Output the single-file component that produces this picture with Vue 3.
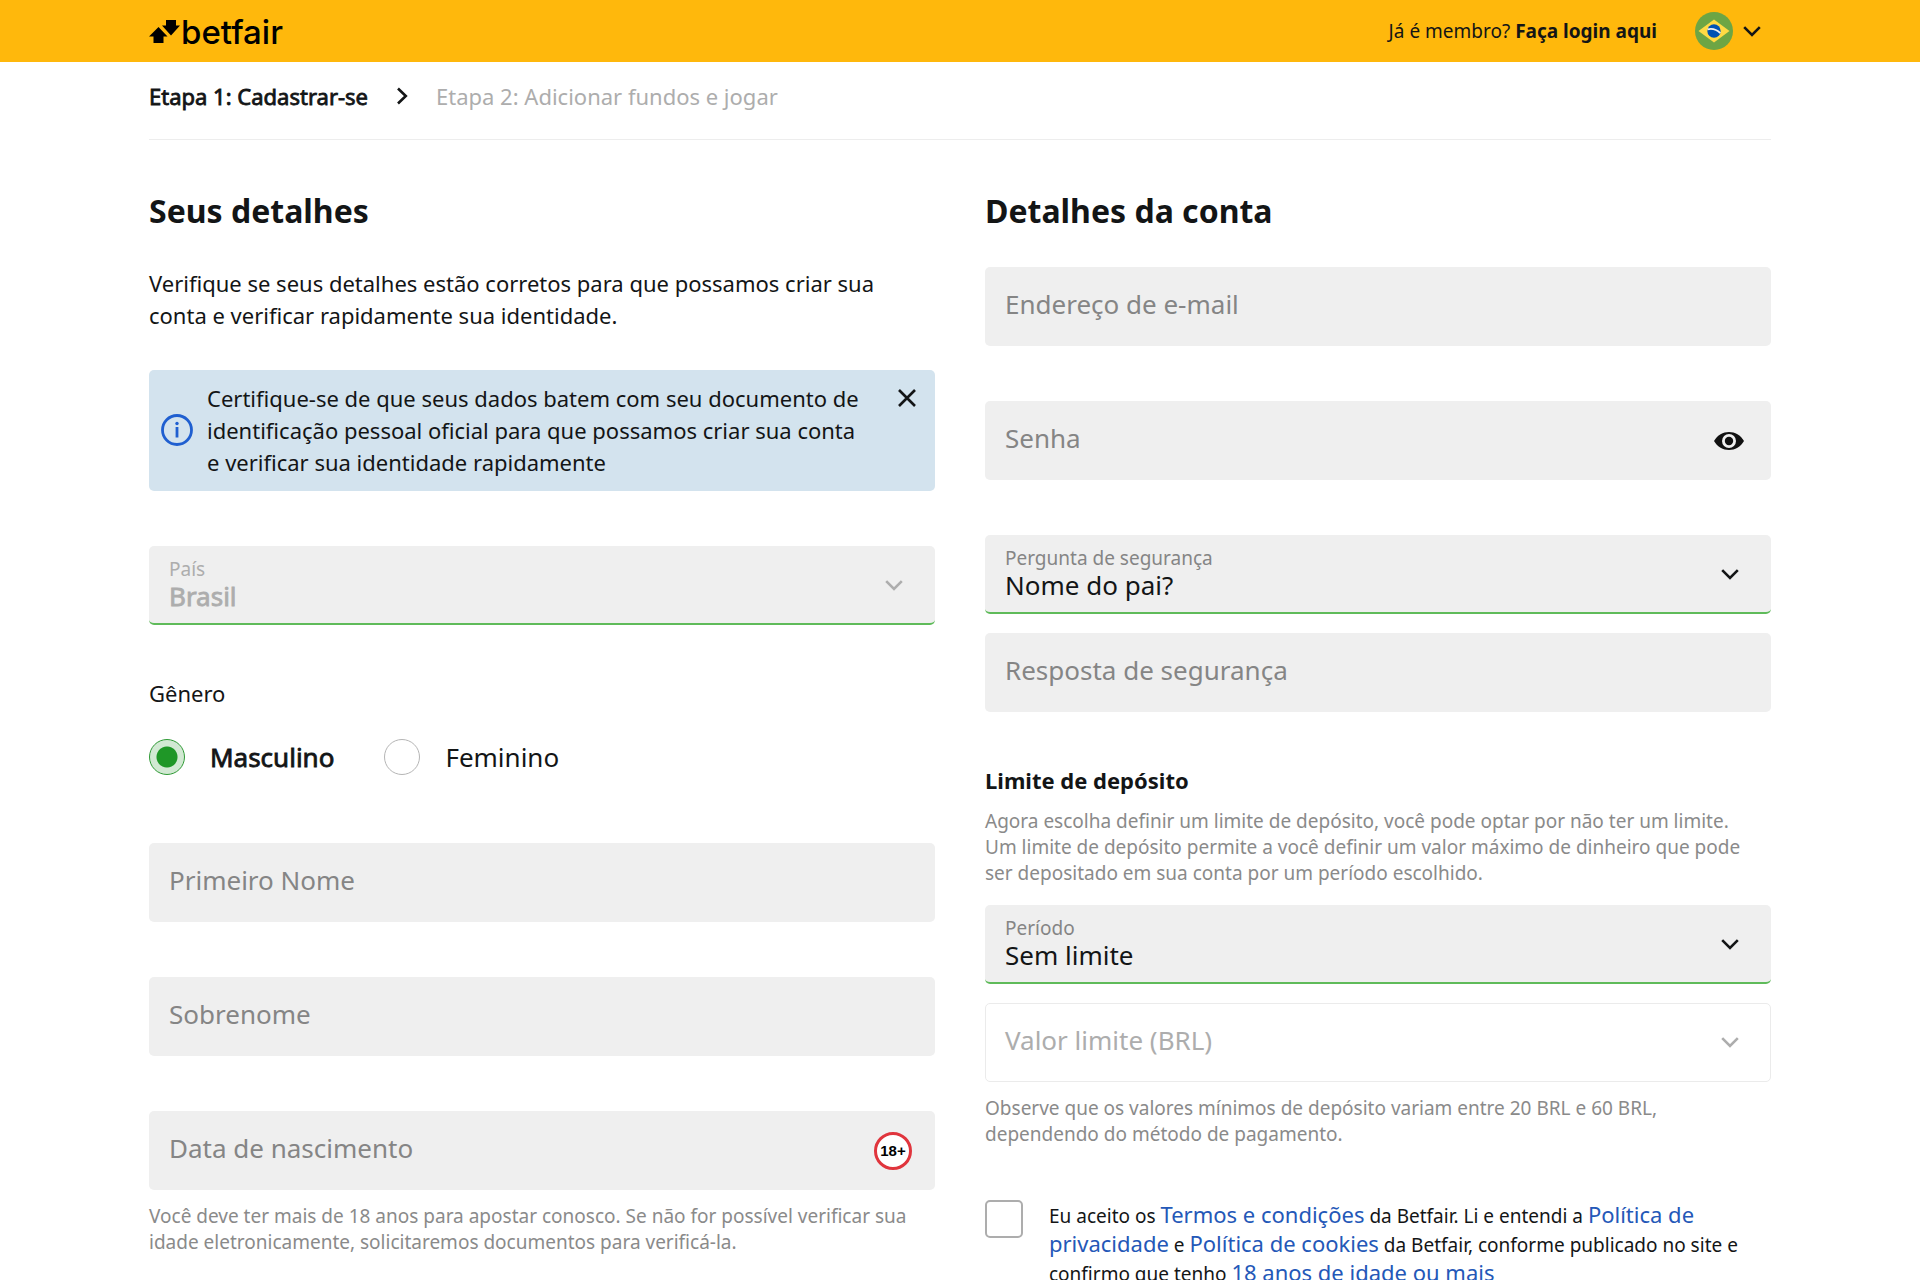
<script setup>
import { ref } from 'vue'

const showAlert = ref(true)
const showPassword = ref(false)
const gender = ref('m')
const country = ref('Brasil')
const question = ref('Nome do pai?')
const period = ref('Sem limite')
</script>

<template>
  <div class="page">
    <header class="topbar">
      <div class="wrap topbar-inner">
        <a class="logo" href="#" aria-label="betfair">
          <svg width="31" height="24" viewBox="0 0 31 24" aria-hidden="true">
            <path d="M9.5 7 18.5 16.5H14.5V23H4.5V16.5H0Z" />
            <path d="M17 0H27V5.5H31L22 15.5 13 5.5H17Z" />
          </svg>
          <span>betfair</span>
        </a>
        <div class="account">
          <p class="login">Já é membro? <a href="#">Faça login aqui</a></p>
          <button class="locale" type="button" aria-label="Brasil">
            <svg width="38" height="38" viewBox="0 0 38 38" aria-hidden="true">
              <circle cx="19" cy="19" r="19" fill="#6da544" />
              <path d="M19 7.5 34.5 19 19 30.5 3.5 19Z" fill="#ffda44" />
              <circle cx="19" cy="19" r="6.7" fill="#0052b4" />
              <path d="M12.6 17.3C17 16.3 22 17.8 25.3 21.2" fill="none" stroke="#f0f0f0" stroke-width="1.8" />
            </svg>
            <svg class="chevron" width="18" height="11" viewBox="0 0 18 11" aria-hidden="true"><path d="M1.2 1.2 9 9 16.8 1.2" /></svg>
          </button>
        </div>
      </div>
    </header>

    <nav class="wrap steps" aria-label="Etapas">
      <span class="emph">Etapa 1: Cadastrar-se</span>
      <svg class="chevron" width="12" height="18" viewBox="0 0 12 18" aria-hidden="true"><path d="M2 1.5 9.8 9 2 16.5" /></svg>
      <span class="next">Etapa 2: Adicionar fundos e jogar</span>
    </nav>

    <main class="wrap">
      <form class="columns" @submit.prevent>
        <section>
          <h2>Seus detalhes</h2>
          <p class="intro">Verifique se seus detalhes estão corretos para que possamos criar sua conta e verificar rapidamente sua identidade.</p>

          <div v-if="showAlert" class="alert">
            <svg width="32" height="32" viewBox="0 0 32 32" aria-hidden="true">
              <circle cx="16" cy="16" r="14.5" fill="none" stroke="#1f5fd0" stroke-width="2.8" />
              <path d="M16 13V23.5" stroke="#1f5fd0" stroke-width="2.8" />
              <circle cx="16" cy="9.5" r="1.7" fill="#1f5fd0" />
            </svg>
            <p>Certifique-se de que seus dados batem com seu documento de identificação pessoal oficial para que possamos criar sua conta e verificar sua identidade rapidamente</p>
            <button type="button" aria-label="Fechar" @click="showAlert = false">
              <svg class="chevron" width="20" height="20" viewBox="0 0 20 20" aria-hidden="true"><path d="M2 2 18 18M18 2 2 18" /></svg>
            </button>
          </div>

          <div class="field filled disabled gap-lg">
            <label for="country">País</label>
            <select id="country" v-model="country" class="emph" disabled><option>Brasil</option></select>
            <svg class="chevron" width="18" height="11" viewBox="0 0 18 11" aria-hidden="true"><path d="M1.2 1.2 9 9 16.8 1.2" /></svg>
          </div>

          <fieldset class="gender">
            <legend>Gênero</legend>
            <div class="options">
              <label :class="{ emph: gender === 'm' }"><input v-model="gender" type="radio" name="gender" value="m" />Masculino</label>
              <label :class="{ emph: gender === 'f' }"><input v-model="gender" type="radio" name="gender" value="f" />Feminino</label>
            </div>
          </fieldset>

          <div class="field">
            <label for="first">Primeiro Nome</label>
            <input id="first" type="text" />
          </div>
          <div class="field gap-lg">
            <label for="last">Sobrenome</label>
            <input id="last" type="text" />
          </div>
          <div class="field gap-lg">
            <label for="birth">Data de nascimento</label>
            <input id="birth" type="text" />
            <span class="age">18+</span>
          </div>
          <p class="hint below">Você deve ter mais de 18 anos para apostar conosco. Se não for possível verificar sua idade eletronicamente, solicitaremos documentos para verificá-la.</p>
        </section>

        <section>
          <h2>Detalhes da conta</h2>
          <div class="field">
            <label for="email">Endereço de e-mail</label>
            <input id="email" type="email" />
          </div>
          <div class="field gap-lg">
            <label for="password">Senha</label>
            <input id="password" :type="showPassword ? 'text' : 'password'" />
            <button class="eye" type="button" aria-label="Mostrar senha" @click="showPassword = !showPassword">
              <svg width="32" height="20" viewBox="0 0 32 20" aria-hidden="true">
                <path d="M1 10C4.5 4 10 1 16 1S27.5 4 31 10C27.5 16 22 19 16 19S4.5 16 1 10Z" fill="#111" />
                <circle cx="16" cy="10" r="7" fill="#efefef" />
                <circle cx="16" cy="10" r="4.2" fill="#111" />
              </svg>
            </button>
          </div>
          <div class="field filled gap-lg">
            <label for="question">Pergunta de segurança</label>
            <select id="question" v-model="question"><option>Nome do pai?</option></select>
            <svg class="chevron" width="18" height="11" viewBox="0 0 18 11" aria-hidden="true"><path d="M1.2 1.2 9 9 16.8 1.2" /></svg>
          </div>
          <div class="field gap-sm">
            <label for="answer">Resposta de segurança</label>
            <input id="answer" type="text" />
          </div>

          <h3>Limite de depósito</h3>
          <p class="hint">Agora escolha definir um limite de depósito, você pode optar por não ter um limite. Um limite de depósito permite a você definir um valor máximo de dinheiro que pode ser depositado em sua conta por um período escolhido.</p>
          <div class="field filled gap-sm">
            <label for="period">Período</label>
            <select id="period" v-model="period"><option>Sem limite</option></select>
            <svg class="chevron" width="18" height="11" viewBox="0 0 18 11" aria-hidden="true"><path d="M1.2 1.2 9 9 16.8 1.2" /></svg>
          </div>
          <div class="field outlined disabled gap-sm">
            <label for="amount">Valor limite (BRL)</label>
            <select id="amount" disabled></select>
            <svg class="chevron" width="18" height="11" viewBox="0 0 18 11" aria-hidden="true"><path d="M1.2 1.2 9 9 16.8 1.2" /></svg>
          </div>
          <p class="hint below">Observe que os valores mínimos de depósito variam entre 20 BRL e 60 BRL, dependendo do método de pagamento.</p>

          <div class="consent">
            <input id="terms" type="checkbox" />
            <label for="terms">Eu aceito os <a href="#">Termos e condições</a> da Betfair. Li e entendi a <a href="#">Política de privacidade</a> e <a href="#">Política de cookies</a> da Betfair, conforme publicado no site e confirmo que tenho <a href="#">18 anos de idade ou mais</a></label>
          </div>
        </section>
      </form>
    </main>
  </div>
</template>

<style>
body {
  margin: 0;
  background: #fff;
}
</style>

<style scoped>
.page {
  height: 100vh;
  overflow: hidden;
  font-family: "Noto Sans", "Open Sans", sans-serif;
  font-size: 22px;
  line-height: 32px;
  color: #131516;
}
.page * {
  box-sizing: border-box;
}
h2, h3, p {
  margin: 0;
}
button {
  padding: 0;
  border: 0;
  background: none;
  color: inherit;
  cursor: pointer;
}
svg {
  display: block;
  flex: none;
}
.wrap {
  width: calc(100% - 48px);
  max-width: 1622px;
  margin: 0 auto;
}
.chevron {
  fill: none;
  stroke: currentColor;
  stroke-width: 2.6;
}
.emph {
  -webkit-text-stroke: 0.8px currentColor;
}

.topbar {
  background: #ffb80c;
}
.topbar-inner {
  display: flex;
  align-items: center;
  justify-content: space-between;
  height: 62px;
}
.logo {
  display: flex;
  align-items: center;
  gap: 1px;
  padding-top: 2px;
  color: #000;
  text-decoration: none;
  font: 500 33px/38px Inter, sans-serif;
}
.account {
  display: flex;
  align-items: center;
  gap: 38px;
  padding-right: 10px;
}
.login {
  font-size: 19px;
}
.login a {
  color: inherit;
  font-weight: 700;
  text-decoration: none;
}
.locale {
  display: flex;
  align-items: center;
  gap: 10px;
}

.steps {
  display: flex;
  align-items: center;
  gap: 28px;
  height: 78px;
  padding-bottom: 10px;
  border-bottom: 1px solid #ededed;
}
.next {
  color: #adadad;
}

.columns {
  display: grid;
  grid-template-columns: 1fr 1fr;
  gap: 50px;
  padding-top: 51px;
}
h2 {
  margin-bottom: 36px;
  font-size: 32px;
  line-height: 40px;
}
.intro {
  max-width: 776px;
  margin-bottom: 39px;
}
.alert {
  display: flex;
  align-items: center;
  gap: 14px;
  padding: 12px 12px 13px;
  border-radius: 5px;
  background: #d3e3ee;
}
.alert p {
  flex: 1;
}
.alert button {
  align-self: flex-start;
  margin: 6px 6px 0 16px;
}

/* Label and control share one grid cell so the label floats over the control. */
.field {
  display: grid;
  grid-template-columns: 1fr;
  height: 79px;
  color: #131516;
}
.field > * {
  grid-area: 1 / 1;
}
.field label {
  z-index: 1;
  align-self: center;
  padding: 0 20px 5px;
  color: #858585;
  font-size: 26px;
  line-height: 36px;
  pointer-events: none;
}
.field input,
.field select {
  width: 100%;
  height: 100%;
  margin: 0;
  padding: 32px 72px 9px 20px;
  border: 0;
  border-radius: 5px;
  background: #efefef;
  color: inherit;
  font: 26px/36px "Noto Sans", "Open Sans", sans-serif;
  appearance: none;
  opacity: 1;
}
.field .chevron {
  z-index: 1;
  place-self: center end;
  margin-right: 32px;
  pointer-events: none;
}
.filled label {
  align-self: start;
  padding: 10px 20px 0;
  font-size: 19px;
  line-height: 26px;
}
.field.filled select {
  border-bottom: 2px solid #5fbb5a;
}
.field.disabled,
.disabled label {
  color: #adadad;
}
.field.outlined select {
  border: 1px solid #ebebeb;
  background: #fff;
}
.gap-lg {
  margin-top: 55px;
}
.gap-sm {
  margin-top: 19px;
}
.age {
  z-index: 1;
  place-self: center end;
  width: 38px;
  height: 38px;
  margin-right: 23px;
  border: 3px solid #e0353d;
  border-radius: 50%;
  background: #fff;
  color: #000;
  font: 700 15px/32px "Liberation Sans", Arial, sans-serif;
  text-align: center;
}
.eye {
  z-index: 1;
  place-self: center end;
  margin-right: 26px;
}

.gender {
  margin: 52px 0 68px;
  padding: 0;
  border: 0;
}
.gender legend {
  padding: 0;
}
.options {
  display: flex;
  gap: 50px;
  margin-top: 30px;
}
.options label {
  display: flex;
  align-items: center;
  gap: 25px;
  font-size: 26px;
  line-height: 36px;
}
.options input {
  width: 36px;
  height: 36px;
  margin: 0;
  border: 1px solid #b5b5b5;
  border-radius: 50%;
  background: #fff;
  appearance: none;
}
.options input:checked {
  border-color: #2f9a35;
  background: radial-gradient(circle, #1f9727 10px, #d2e9d3 11px);
}

.hint {
  max-width: 776px;
  color: #8a8a8a;
  font-size: 19px;
  line-height: 26px;
}
.below {
  margin-top: 13px;
}
h3 {
  margin: 52px 0 12px;
  font-size: 22px;
  line-height: 32px;
}
.consent {
  display: flex;
  align-items: flex-start;
  gap: 26px;
  margin-top: 53px;
}
.consent input {
  flex: none;
  width: 38px;
  height: 38px;
  margin: 0;
  border: 2px solid #adadad;
  border-radius: 5px;
  background: #fff;
  appearance: none;
}
.consent label {
  padding-top: 2px;
  font-size: 19px;
  line-height: 29px;
}
.consent a {
  color: #2458b8;
  font-size: 22px;
  line-height: 24px;
  text-decoration: none;
}
</style>
